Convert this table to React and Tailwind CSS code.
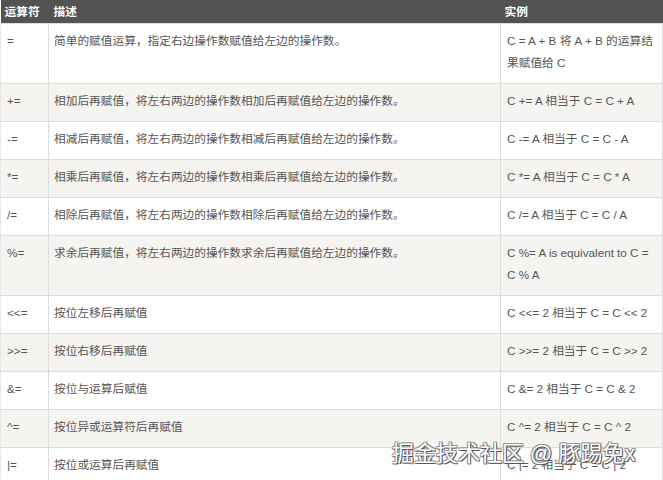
const rows = [
  { op: '=', desc: '简单的赋值运算，指定右边操作数赋值给左边的操作数。', ex: ['C = A + B 将 A + B 的运算结', '果赋值给 C'] },
  { op: '+=', desc: '相加后再赋值，将左右两边的操作数相加后再赋值给左边的操作数。', ex: ['C += A 相当于 C = C + A'] },
  { op: '-=', desc: '相减后再赋值，将左右两边的操作数相减后再赋值给左边的操作数。', ex: ['C -= A 相当于 C = C - A'] },
  { op: '*=', desc: '相乘后再赋值，将左右两边的操作数相乘后再赋值给左边的操作数。', ex: ['C *= A 相当于 C = C * A'] },
  { op: '/=', desc: '相除后再赋值，将左右两边的操作数相除后再赋值给左边的操作数。', ex: ['C /= A 相当于 C = C / A'] },
  { op: '%=', desc: '求余后再赋值，将左右两边的操作数求余后再赋值给左边的操作数。', ex: ['C %= A is equivalent to C =', 'C % A'] },
  { op: '<<=', desc: '按位左移后再赋值', ex: ['C <<= 2 相当于 C = C << 2'] },
  { op: '>>=', desc: '按位右移后再赋值', ex: ['C >>= 2 相当于 C = C >> 2'] },
  { op: '&=', desc: '按位与运算后赋值', ex: ['C &= 2 相当于 C = C & 2'] },
  { op: '^=', desc: '按位异或运算符后再赋值', ex: ['C ^= 2 相当于 C = C ^ 2'] },
  { op: '|=', desc: '按位或运算后再赋值', ex: ['C |= 2 相当于 C = C | 2'] },
];

export default function App() {
  return (
    <div className="relative w-[663px] h-[480px] overflow-hidden bg-white font-['Liberation_Sans','Noto_Sans_CJK_SC',sans-serif] text-[11.7px] text-[#555]">
      <table className="w-[663px] table-fixed border-collapse">
        <colgroup>
          <col className="w-[48px]" />
          <col className="w-[452px]" />
          <col />
        </colgroup>
        <thead>
          <tr className="h-[23px] bg-[#535353] text-white font-bold text-left">
            <th className="px-[4px] leading-[23px] whitespace-nowrap">运算符</th>
            <th className="px-[5px] leading-[23px]">描述</th>
            <th className="px-[4px] leading-[23px]">实例</th>
          </tr>
        </thead>
        <tbody>
          {rows.map((r, i) => (
            <tr key={r.op} className={i % 2 === 1 ? 'bg-[#f6f4f0]' : 'bg-white'}>
              <td className="border border-[#dcdcdc] border-l-[#e6e6e6] px-[6px] pt-[6px] pb-[9px] leading-[22px] align-top whitespace-nowrap">{r.op}</td>
              <td className="border border-[#dcdcdc] px-[5px] pt-[6px] pb-[9px] leading-[22px] align-top whitespace-nowrap">{r.desc}</td>
              <td className="border border-[#dcdcdc] px-[6px] pt-[6px] pb-[9px] leading-[22px] align-top whitespace-nowrap overflow-hidden">
                {r.ex.map((line, j) => (
                  <div key={j}>{line}</div>
                ))}
              </td>
            </tr>
          ))}
        </tbody>
      </table>
      <div className="absolute left-[392px] top-[439px] text-[22px] leading-[30px] text-white whitespace-nowrap [text-shadow:1px_1px_0_#555,-1px_-1px_0_#999,1px_-1px_0_#888,-1px_1px_0_#888]">
        掘金技术社区 @ 豚踢兔x
      </div>
    </div>
  );
}
